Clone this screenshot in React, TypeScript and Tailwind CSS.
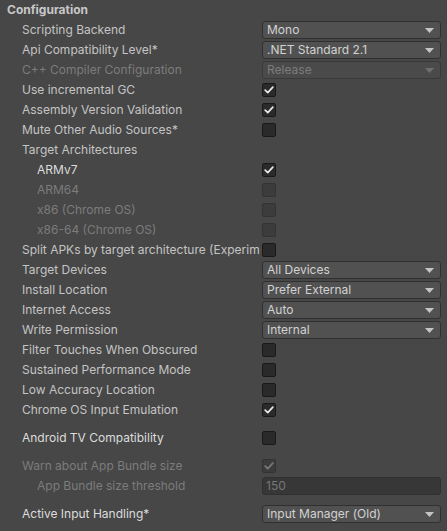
import React from "react";

const Check = ({ disabled }: { disabled?: boolean }) => (
  <svg width="10" height="8" viewBox="0 0 10 8" className="block">
    <path
      d="M1.2 4.2 L3.8 6.6 L8.8 1.2"
      fill="none"
      stroke={disabled ? "#7a7a7a" : "#e8e8e8"}
      strokeWidth="1.7"
      strokeLinecap="round"
      strokeLinejoin="round"
    />
  </svg>
);

const Checkbox = ({ checked, disabled }: { checked?: boolean; disabled?: boolean }) => (
  <div
    className={
      disabled
        ? "w-[14px] h-[14px] rounded-[2px] border border-[#333333] bg-[#3c3c3c] flex items-center justify-center"
        : "w-[14px] h-[14px] rounded-[2px] border border-[#191919] bg-[#2a2a2a] flex items-center justify-center"
    }
  >
    {checked && <Check disabled={disabled} />}
  </div>
);

const Arrow = ({ disabled }: { disabled?: boolean }) => (
  <svg width="9" height="5" viewBox="0 0 9 5" className="block">
    <path d="M0 0 H9 L4.5 5 Z" fill={disabled ? "#6e6e6e" : "#c4c4c4"} />
  </svg>
);

const Dropdown = ({ value, disabled }: { value: string; disabled?: boolean }) => (
  <div
    className={
      disabled
        ? "w-[179px] h-[18px] rounded-[3px] border border-[#3a3a3a] bg-[#4a4a4a] flex items-center justify-between pl-[4px] pr-[6px] text-[#7c7c7c]"
        : "w-[179px] h-[18px] rounded-[3px] border border-[#303030] bg-[#515151] flex items-center justify-between pl-[4px] pr-[6px] text-[#d2d2d2]"
    }
  >
    <span className="leading-none">{value}</span>
    <Arrow disabled={disabled} />
  </div>
);

const TextField = ({ value }: { value: string }) => (
  <div className="w-[179px] h-[18px] rounded-[3px] border border-[#303030] bg-[#373737] flex items-center pl-[3px] text-[#777777]">
    <span className="leading-none">{value}</span>
  </div>
);

type RowProps = {
  label: string;
  indent?: number;
  disabled?: boolean;
  bright?: boolean;
  children?: React.ReactNode;
};

const Row = ({ label, indent = 0, disabled, bright, children }: RowProps) => (
  <div className="flex h-[20px] items-center">
    <div
      className={
        "w-[262px] shrink-0 overflow-hidden whitespace-nowrap pr-[2px] " +
        (indent === 1 ? "pl-[37px] " : "pl-[22px] ") +
        (disabled ? "text-[#7c7c7c]" : bright ? "text-[#dcdcdc]" : "text-[#c4c4c4]")
      }
    >
      <div className="overflow-hidden">{label}</div>
    </div>
    <div className="flex items-center">{children}</div>
  </div>
);

export default function App() {
  return (
    <div
      className="w-[447px] h-[531px] bg-[#474747] text-[12px] overflow-hidden"
      style={{ fontFamily: "Inter, 'Noto Sans', sans-serif" }}
    >
      <div className="h-[20px] flex items-center pl-[7px] font-bold text-[#c8c8c8]">Configuration</div>
      <Row label="Scripting Backend"><Dropdown value="Mono" /></Row>
      <Row label="Api Compatibility Level*"><Dropdown value=".NET Standard 2.1" /></Row>
      <Row label="C++ Compiler Configuration" disabled><Dropdown value="Release" disabled /></Row>
      <Row label="Use incremental GC"><Checkbox checked /></Row>
      <Row label="Assembly Version Validation"><Checkbox checked /></Row>
      <Row label="Mute Other Audio Sources*"><Checkbox /></Row>
      <Row label="Target Architectures" />
      <Row label="ARMv7" indent={1} bright><Checkbox checked /></Row>
      <Row label="ARM64" indent={1} disabled><Checkbox disabled /></Row>
      <Row label="x86 (Chrome OS)" indent={1} disabled><Checkbox disabled /></Row>
      <Row label="x86-64 (Chrome OS)" indent={1} disabled><Checkbox disabled /></Row>
      <Row label="Split APKs by target architecture (Experimental)"><Checkbox /></Row>
      <Row label="Target Devices"><Dropdown value="All Devices" /></Row>
      <Row label="Install Location"><Dropdown value="Prefer External" /></Row>
      <Row label="Internet Access"><Dropdown value="Auto" /></Row>
      <Row label="Write Permission"><Dropdown value="Internal" /></Row>
      <Row label="Filter Touches When Obscured"><Checkbox /></Row>
      <Row label="Sustained Performance Mode"><Checkbox /></Row>
      <Row label="Low Accuracy Location"><Checkbox /></Row>
      <Row label="Chrome OS Input Emulation"><Checkbox checked /></Row>
      <div className="h-[8px]" />
      <Row label="Android TV Compatibility" bright><Checkbox /></Row>
      <div className="h-[8px]" />
      <Row label="Warn about App Bundle size" disabled><Checkbox checked disabled /></Row>
      <Row label="App Bundle size threshold" indent={1} disabled><TextField value="150" /></Row>
      <div className="h-[8px]" />
      <Row label="Active Input Handling*" bright><Dropdown value="Input Manager (Old)" /></Row>
    </div>
  );
}
